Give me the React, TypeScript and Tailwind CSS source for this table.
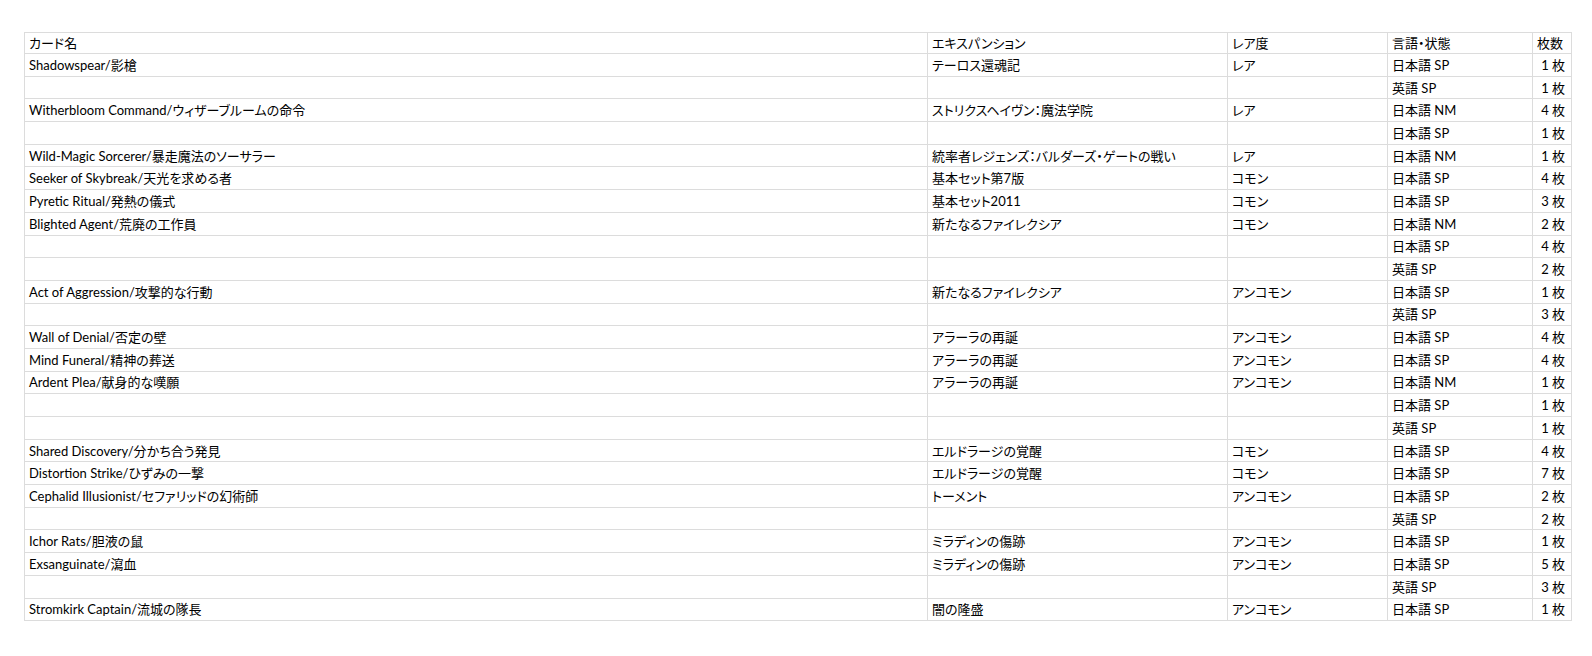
import React from "react";

interface Row {
    name: string,
    expansion: string,
    rarity: string,
    condition: string,
    count: number
}

const rows: Row[] = [
    { name: "Shadowspear/影槍", expansion: "テーロス還魂記", rarity: "レア", condition: "日本語 SP", count: 1 },
    { name: "", expansion: "", rarity: "", condition: "英語 SP", count: 1 },
    { name: "Witherbloom Command/ウィザーブルームの命令", expansion: "ストリクスヘイヴン：魔法学院", rarity: "レア", condition: "日本語 NM", count: 4 },
    { name: "", expansion: "", rarity: "", condition: "日本語 SP", count: 1 },
    { name: "Wild-Magic Sorcerer/暴走魔法のソーサラー", expansion: "統率者レジェンズ：バルダーズ・ゲートの戦い", rarity: "レア", condition: "日本語 NM", count: 1 },
    { name: "Seeker of Skybreak/天光を求める者", expansion: "基本セット第7版", rarity: "コモン", condition: "日本語 SP", count: 4 },
    { name: "Pyretic Ritual/発熱の儀式", expansion: "基本セット2011", rarity: "コモン", condition: "日本語 SP", count: 3 },
    { name: "Blighted Agent/荒廃の工作員", expansion: "新たなるファイレクシア", rarity: "コモン", condition: "日本語 NM", count: 2 },
    { name: "", expansion: "", rarity: "", condition: "日本語 SP", count: 4 },
    { name: "", expansion: "", rarity: "", condition: "英語 SP", count: 2 },
    { name: "Act of Aggression/攻撃的な行動", expansion: "新たなるファイレクシア", rarity: "アンコモン", condition: "日本語 SP", count: 1 },
    { name: "", expansion: "", rarity: "", condition: "英語 SP", count: 3 },
    { name: "Wall of Denial/否定の壁", expansion: "アラーラの再誕", rarity: "アンコモン", condition: "日本語 SP", count: 4 },
    { name: "Mind Funeral/精神の葬送", expansion: "アラーラの再誕", rarity: "アンコモン", condition: "日本語 SP", count: 4 },
    { name: "Ardent Plea/献身的な嘆願", expansion: "アラーラの再誕", rarity: "アンコモン", condition: "日本語 NM", count: 1 },
    { name: "", expansion: "", rarity: "", condition: "日本語 SP", count: 1 },
    { name: "", expansion: "", rarity: "", condition: "英語 SP", count: 1 },
    { name: "Shared Discovery/分かち合う発見", expansion: "エルドラージの覚醒", rarity: "コモン", condition: "日本語 SP", count: 4 },
    { name: "Distortion Strike/ひずみの一撃", expansion: "エルドラージの覚醒", rarity: "コモン", condition: "日本語 SP", count: 7 },
    { name: "Cephalid Illusionist/セファリッドの幻術師", expansion: "トーメント", rarity: "アンコモン", condition: "日本語 SP", count: 2 },
    { name: "", expansion: "", rarity: "", condition: "英語 SP", count: 2 },
    { name: "Ichor Rats/胆液の鼠", expansion: "ミラディンの傷跡", rarity: "アンコモン", condition: "日本語 SP", count: 1 },
    { name: "Exsanguinate/瀉血", expansion: "ミラディンの傷跡", rarity: "アンコモン", condition: "日本語 SP", count: 5 },
    { name: "", expansion: "", rarity: "", condition: "英語 SP", count: 3 },
    { name: "Stromkirk Captain/流城の隊長", expansion: "闇の隆盛", rarity: "アンコモン", condition: "日本語 SP", count: 1 },
];

const cell = "border border-[#dcdcdc] px-[4px] pt-[1px] pb-0 whitespace-nowrap overflow-hidden";

const App: React.FC = () => {
    return (
        <div className="w-[1592px] h-[656px] bg-white pt-[32px] pl-[24px] font-['Lato','Noto_Sans_CJK_JP',sans-serif] text-[13px] text-black leading-none [font-feature-settings:'palt']">
            <table className="table-fixed border-collapse w-[1547px]">
                <colgroup>
                    <col className="w-[903px]" />
                    <col className="w-[300px]" />
                    <col className="w-[160px]" />
                    <col className="w-[145px]" />
                    <col className="w-[39px]" />
                </colgroup>
                <thead>
                    <tr className="h-[21px]">
                        <th className={`${cell} text-left font-normal`}>カード名</th>
                        <th className={`${cell} text-left font-normal`}>エキスパンション</th>
                        <th className={`${cell} text-left font-normal`}>レア度</th>
                        <th className={`${cell} text-left font-normal`}>言語・状態</th>
                        <th className={`${cell} text-left font-normal`}>枚数</th>
                    </tr>
                </thead>
                <tbody>
                    {rows.map((r, i) =>
                        <tr key={i} className="h-[22.7px]">
                            <td className={cell}>{r.name}</td>
                            <td className={cell}>{r.expansion}</td>
                            <td className={cell}>{r.rarity}</td>
                            <td className={cell}>{r.condition}</td>
                            <td className={`${cell} text-right pr-[6px]`}>{r.count} 枚</td>
                        </tr>
                    )}
                </tbody>
            </table>
        </div>
    );
};

export default App;
